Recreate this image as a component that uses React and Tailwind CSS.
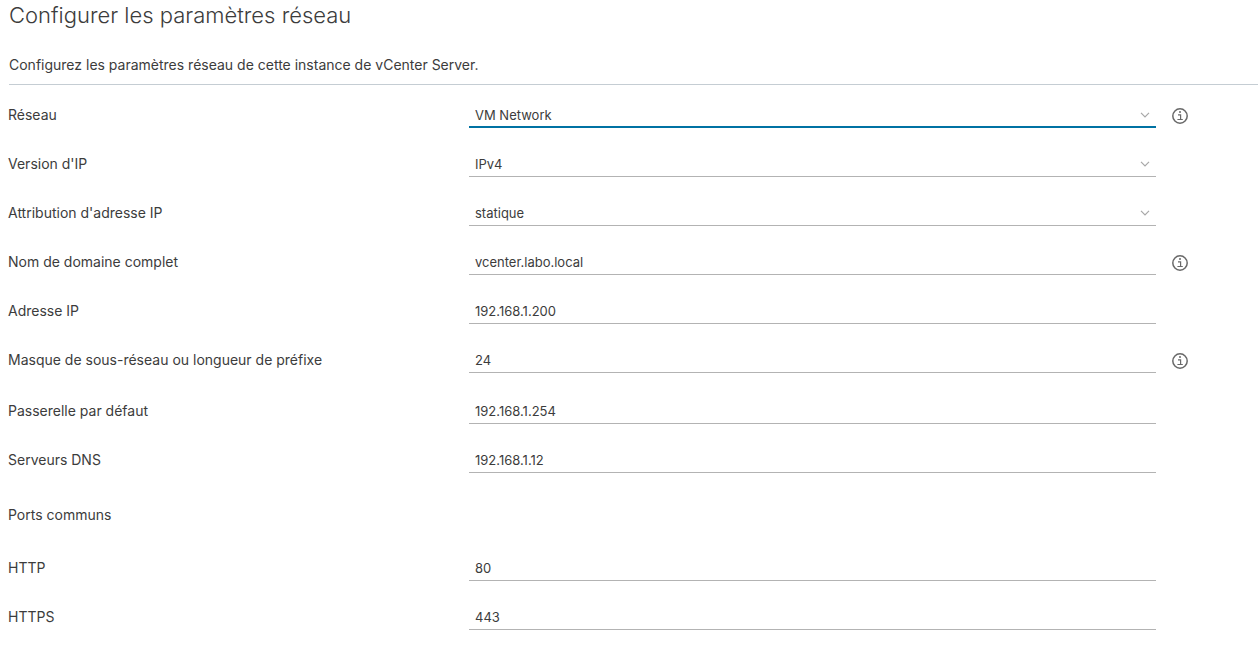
import { useId } from "react";

function InfoIcon() {
  return (
    <svg viewBox="0 0 16 16" className="block size-4" fill="none" stroke="#696969" aria-hidden="true">
      <circle cx="8" cy="8" r="7.2" strokeWidth="1.5" />
      <path d="M6 6.9h2.6v4.4M5.4 11.5h5.4" strokeWidth="1.2" />
      <circle cx="8" cy="4.1" r="1" fill="#696969" stroke="none" />
    </svg>
  );
}

function Row({ id, label, info, children }) {
  return (
    <div className="flex h-6 items-center">
      <label htmlFor={id} className="w-[461px] shrink-0 pb-0.5 text-sm leading-5">
        {label}
      </label>
      <div className="relative h-6 min-w-0 flex-1">{children}</div>
      <div className="w-[102px] shrink-0 pl-4">
        {info && (
          <button type="button" aria-label={`Aide : ${label}`} className="block">
            <InfoIcon />
          </button>
        )}
      </div>
    </div>
  );
}

function SelectField({ label, value, info, active }) {
  const id = useId();
  const line = active ? "border-b-2 border-[#0072a3]" : "border-b border-[#b3b3b3] pb-px";
  return (
    <Row id={id} label={label} info={info}>
      <select
        id={id}
        defaultValue={value}
        className={`block h-6 w-full appearance-none rounded-none bg-transparent px-1.5 text-[13px] leading-5 outline-none ${line}`}
      >
        <option>{value}</option>
      </select>
      <svg
        viewBox="0 0 10 6"
        className="pointer-events-none absolute top-2 right-1.5 h-1.5 w-2.5"
        fill="none"
        stroke="#a8a8a8"
        strokeWidth="1.2"
        aria-hidden="true"
      >
        <path d="M1 0.8 5 4.8 9 0.8" />
      </svg>
    </Row>
  );
}

function TextField({ label, value, info }) {
  const id = useId();
  return (
    <Row id={id} label={label} info={info}>
      <input
        id={id}
        type="text"
        defaultValue={value}
        className="block h-6 w-full rounded-none border-b border-[#b3b3b3] bg-transparent px-1.5 pb-0.5 text-[13px] leading-5 outline-none"
      />
    </Row>
  );
}

export default function App() {
  return (
    <main className="min-h-screen bg-white pl-2 font-['Inter','Liberation_Sans',sans-serif] text-[#3c3c3c]">
      <header className="ml-px border-b border-[#c5cdd3] pt-px pb-[7px]">
        <h1 className="text-[22px] leading-7 font-light">Configurer les paramètres réseau</h1>
        <p className="mt-6 text-sm leading-6">
          Configurez les paramètres réseau de cette instance de vCenter Server.
        </p>
      </header>
      <form className="pt-[19px]">
        <div className="flex flex-col gap-[25px]">
          <SelectField label="Réseau" value="VM Network" info active />
          <SelectField label="Version d'IP" value="IPv4" />
          <SelectField label="Attribution d'adresse IP" value="statique" />
          <TextField label="Nom de domaine complet" value="vcenter.labo.local" info />
          <TextField label="Adresse IP" value="192.168.1.200" />
          <TextField label="Masque de sous-réseau ou longueur de préfixe" value="24" info />
        </div>
        <div className="mt-[27px] flex flex-col gap-[25px]">
          <TextField label="Passerelle par défaut" value="192.168.1.254" />
          <TextField label="Serveurs DNS" value="192.168.1.12" />
        </div>
        <h2 className="my-[30px] text-sm leading-6">Ports communs</h2>
        <div className="flex flex-col gap-[25px]">
          <TextField label="HTTP" value="80" />
          <TextField label="HTTPS" value="443" />
        </div>
      </form>
    </main>
  );
}
